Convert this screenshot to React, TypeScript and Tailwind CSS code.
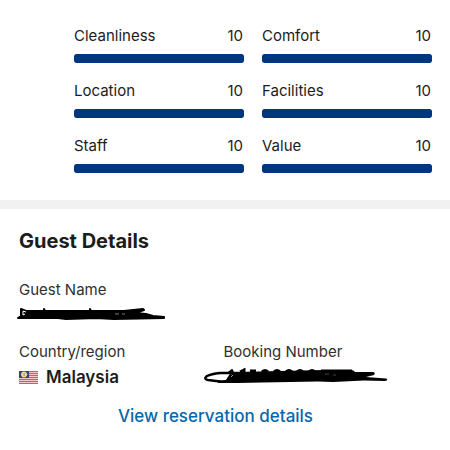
const ratings = [
  { label: "Cleanliness", score: 10 },
  { label: "Comfort", score: 10 },
  { label: "Location", score: 10 },
  { label: "Facilities", score: 10 },
  { label: "Staff", score: 10 },
  { label: "Value", score: 10 },
];

function Rating({ label, score }: { label: string; score: number }) {
  return (
    <li>
      <div className="flex justify-between pr-px text-[15px] leading-5">
        <span>{label}</span>
        <span>{score}</span>
      </div>
      <div className="mt-2 h-[9px] overflow-hidden rounded-xs">
        <div className="h-full rounded-xs bg-[#00357f]" style={{ width: `${score * 10}%` }} />
      </div>
    </li>
  );
}

function MalaysiaFlag() {
  return (
    <svg className="h-[13px] w-[19px]" viewBox="0 0 19 13" aria-hidden="true">
      <rect width="19" height="13" fill="#f6c9cf" />
      {[0, 2, 4, 6, 8, 10, 12].map((y) => (
        <rect key={y} y={y} width="19" height="1" fill="#dc5268" />
      ))}
      <rect width="10" height="7" fill="#3b3d80" />
      <circle cx="5" cy="3.5" r="2.9" fill="#eadc86" />
      <circle cx="5.8" cy="3.5" r="1.6" fill="#a5a59c" />
      <circle cx="7" cy="3.5" r="1.2" fill="#eee3a0" />
    </svg>
  );
}

function NameScribble() {
  return (
    <svg className="-ml-[3px] h-[15px] w-[150px]" viewBox="0 0 150 15" role="img" aria-label="Hidden guest name">
      <path d="M5 3 L10 5 L28 5 L28 3 L29 5 L74 5 L74 3 L75 5 L108 5 L127 3 L128 4 L119 7 L130 8 L137 10 L148 11 L148 12 L98 13 L80 12 L50 13 L42 12 L2 12 L5 10 Z" fill="#000" stroke="#000" strokeWidth="2" strokeLinejoin="round" />
      <path d="M7 5 V9 L9 8 M7 5 L10 6" fill="none" stroke="#fff" strokeWidth="1" />
      <path d="M99 8 H103 M106 8 H109" fill="none" stroke="#777" strokeWidth="1" />
    </svg>
  );
}

function BookingScribble() {
  return (
    <svg className="-ml-[22px] h-4 w-[186px]" viewBox="0 0 186 16" role="img" aria-label="Hidden booking number">
      <path d="M36 5 L18 5 Q9 6 5 8 Q1 11 6 12 L18 13.5" fill="none" stroke="#000" strokeWidth="2.5" strokeLinecap="round" />
      <path d="M26 10 L24 12 L16 12.5 V15 L36 15 L60 14.5 L116 13.5 L131 14 L162 12.5 L183 13 Q187 12 184 10.5 L164 9 L172 7 Q174 4.5 171 4 L153 4 Q152 2 149 2 L122 2 L34 4 L30 6 Z" fill="#000" />
      <path d="M27 5 L31 2 M38 4 L42 2 V5 M48 3 H54 M60 4 Q63 1 66 4 M72 4 Q75 1 78 4 M84 4 Q87 1 90 4 M95 4 Q98 1 101 4 M107 4 Q110 1 113 4 M119 3 H150" fill="none" stroke="#000" strokeWidth="3" />
      <path d="M29 6 L25 12" stroke="#000" strokeWidth="2" />
      <path d="M31 7 L29 9" stroke="#999" strokeWidth="1" />
      <path d="M123 6 H127 M131 7 H134" stroke="#444" strokeWidth="1" />
    </svg>
  );
}

export default function App() {
  return (
    <main className="bg-white pb-6 font-['Inter',sans-serif] text-[#1c1c1c]">
      <section aria-label="Review scores" className="pt-[26px] pr-[18px] pb-[27px] pl-[74px]">
        <ul className="grid grid-cols-2 gap-x-[18px] gap-y-[18px]">
          {ratings.map((rating) => (
            <Rating key={rating.label} {...rating} />
          ))}
        </ul>
      </section>
      <div className="h-[9px] bg-[#f1f1f1]" />
      <section className="pt-[18px] pr-[22px] pl-[19px]">
        <h2 className="text-xl leading-7 font-bold">Guest Details</h2>
        <dl className="mt-[25px] grid grid-cols-2 text-[15px] leading-5">
          <div className="col-span-2">
            <dt className="text-[#303030]">Guest Name</dt>
            <dd className="mt-[6px]">
              <NameScribble />
            </dd>
          </div>
          <div className="mt-[21px]">
            <dt className="text-[#303030]">Country/region</dt>
            <dd className="mt-[3px] flex items-center gap-2 text-[17px] leading-6 font-semibold">
              <MalaysiaFlag />
              Malaysia
            </dd>
          </div>
          <div className="mt-[21px]">
            <dt className="text-[#303030]">Booking Number</dt>
            <dd className="mt-[6px]">
              <BookingScribble />
            </dd>
          </div>
        </dl>
        <div className="mt-[15px] pr-4 text-center">
          <a href="#reservation" className="text-[17px] leading-6 font-medium text-[#0668ad]">
            View reservation details
          </a>
        </div>
      </section>
    </main>
  );
}
